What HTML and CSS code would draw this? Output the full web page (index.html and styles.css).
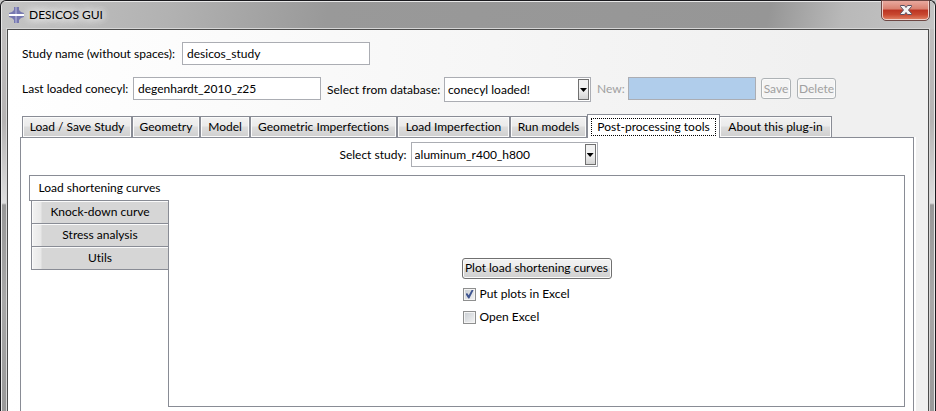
FILE: index.html
```html
<!DOCTYPE html>
<html lang="en">
<head>
<meta charset="utf-8">
<title>DESICOS GUI</title>
<link rel="stylesheet" href="styles.css">
</head>
<body>
<div class="window">
  <header class="titlebar">
    <svg class="app-icon" width="15" height="16" viewBox="0 0 15 16" aria-hidden="true">
      <path d="M5 0h5v3l2 2 3 1v4l-3 1-2 2v3H5v-3l-2-2-3-1V6l3-1 2-2z" fill="#7678b0"/>
      <path d="M6 0h2v16H6z" fill="#9a9bc8"/>
      <path d="M0 7h15v2H0z" fill="#fff"/>
    </svg>
    <h1 class="title">DESICOS GUI</h1>
    <button class="close" type="button" aria-label="Close">
      <svg width="12" height="10" viewBox="0 0 12 10" aria-hidden="true">
        <path d="M.5.5h4L6 2.500 7.500.5h4v1L8.500 5l3 3.500v1h-4L6 7.500 4.500 9.500h-4v-1L3.500 5l-3-3.500z" fill="#f4f4f4" stroke="#5b5160"/>
      </svg>
    </button>
  </header>
  <main class="client">
    <div class="row">
      <label class="label-study" for="study">Study name (without spaces):</label>
      <input class="field" id="study" type="text" value="desicos_study">
    </div>
    <div class="row row-conecyl">
      <label class="label-conecyl" for="conecyl">Last loaded conecyl:</label>
      <input class="field" id="conecyl" type="text" value="degenhardt_2010_z25">
      <label class="label-database" for="database">Select from database:</label>
      <span class="combo combo-database">
        <select id="database"><option>conecyl loaded!</option></select>
        <span class="arrow"></span>
      </span>
      <label class="label-new" for="new">New:</label>
      <input class="field field-new" id="new" type="text" disabled>
      <button class="button save" type="button" disabled>Save</button>
      <button class="button delete" type="button" disabled>Delete</button>
    </div>
    <nav class="tabs" role="tablist">
      <button class="tab" role="tab" type="button">Load / Save Study</button>
      <button class="tab" role="tab" type="button">Geometry</button>
      <button class="tab" role="tab" type="button">Model</button>
      <button class="tab" role="tab" type="button">Geometric Imperfections</button>
      <button class="tab" role="tab" type="button">Load Imperfection</button>
      <button class="tab" role="tab" type="button">Run models</button>
      <button class="tab selected" role="tab" type="button" aria-selected="true"><span class="focus">Post-processing tools</span></button>
      <button class="tab" role="tab" type="button">About this plug-in</button>
    </nav>
    <section class="pane">
      <div class="study-row">
        <label class="label-select" for="select-study">Select study:</label>
        <span class="combo combo-study">
          <select id="select-study"><option>aluminum_r400_h800</option></select>
          <span class="arrow"></span>
        </span>
      </div>
      <div class="book">
        <nav class="side-tabs" role="tablist">
          <button class="side-tab side-selected" role="tab" type="button" aria-selected="true">Load shortening curves</button>
          <button class="side-tab" role="tab" type="button">Knock-down curve</button>
          <button class="side-tab" role="tab" type="button">Stress analysis</button>
          <button class="side-tab" role="tab" type="button">Utils</button>
        </nav>
        <div class="page">
          <div class="actions">
            <button class="button plot" type="button">Plot load shortening curves</button>
            <label class="check"><input type="checkbox" checked>Put plots in Excel</label>
            <label class="check"><input type="checkbox">Open Excel</label>
          </div>
        </div>
      </div>
    </section>
  </main>
</div>
</body>
</html>
```
FILE: styles.css
```css
* {
  box-sizing: border-box;
}

body {
  margin: 0;
  background: #c8c8c8;
  color: #000;
  font: 12px/16px Lato, "Open Sans", sans-serif;
  font-variant-ligatures: none;
}

button,
input,
select {
  margin: 0;
  color: inherit;
  font: inherit;
}

label,
button {
  white-space: nowrap;
}

.window {
  display: flex;
  flex-direction: column;
  min-height: 100vh;
  padding: 0 6px;
  border: solid #1a1a1e;
  border-width: 1px 1px 0;
  border-radius: 6px 6px 0 0;
  background:
    linear-gradient(#e8e8e8, #e8e8e8) left / 1px 100% no-repeat,
    linear-gradient(#e8e8e8, #e8e8e8) right / 1px 100% no-repeat,
    linear-gradient(#e8e8e8, #e8e8e8) top / 100% 1px no-repeat,
    linear-gradient(100deg, #c4c4c4, #b2b2b2 18%, #999 35%, #969696 82%, #b9b9b9 90%, #c4c4c4) top / 100% 28px no-repeat,
    linear-gradient(#c0bebe 28px, #b5b3b3 120px, #dedede 202px, #989898 204px, #a8a8a8 300px, #999);
}

.titlebar {
  display: flex;
  align-items: flex-start;
  height: 28px;
  padding-left: 2px;
}

.app-icon {
  margin-top: 6px;
}

.title {
  margin: 5px 0 0 5px;
  font-size: 12px;
  font-weight: 400;
  line-height: 18px;
  text-shadow: 0 0 8px #fff, 0 0 8px #fff, 0 0 12px #fff;
}

.close {
  display: flex;
  align-items: center;
  justify-content: center;
  width: 47px;
  height: 19px;
  margin-left: auto;
  padding: 0;
  border: 1px solid #f0cfc8;
  border-top: 0;
  border-radius: 0 0 4px 4px;
  outline: 1px solid #6e4743;
  background: linear-gradient(#e9a99e, #d9806f 45%, #bb3322 50%, #c8472f 75%, #dd7a5e);
}

.client {
  display: flex;
  flex: 1;
  flex-direction: column;
  padding: 12px 12px 0;
  border: solid #4c4c4c;
  border-width: 1px 1px 0;
  outline: 1px solid #d6d6d6;
  background: linear-gradient(90deg, #fff, #f0f0f0 88%);
}

.row {
  display: flex;
  padding-left: 2px;
}

.row > label {
  line-height: 23px;
}

.row-conecyl {
  margin-top: 12px;
}

.label-study {
  width: 160px;
}

.label-conecyl {
  width: 111px;
}

.label-database {
  width: 123px;
  padding-left: 6px;
}

.row > .label-database {
  line-height: 25px;
}

.label-new {
  width: 37px;
  padding-left: 6px;
  color: #a0a0a0;
}

.field {
  width: 188px;
  height: 23px;
  padding: 0 4px;
  border: 1px solid #abadb3;
  background: #fff;
}

.field-new {
  width: 128px;
  background: #b0cdeb;
}

.combo {
  position: relative;
  display: flex;
  height: 25px;
}

.combo-database {
  width: 147px;
}

.combo-study {
  width: 187px;
}

.combo select {
  width: 100%;
  padding: 0 16px 0 3px;
  border: 1px solid #abadb3;
  border-radius: 0;
  background: #fff;
  appearance: none;
}

.arrow {
  position: absolute;
  top: 2px;
  right: 2px;
  bottom: 2px;
  width: 11px;
  border: 1px solid #707070;
  background: linear-gradient(#f2f2f2 50%, #d4d4d4);
  pointer-events: none;
}

.arrow::after {
  content: "";
  position: absolute;
  top: 8px;
  left: 1px;
  width: 7px;
  height: 4px;
  background: #000;
  clip-path: polygon(0 0, 100% 0, 50% 100%);
}

.button {
  height: 21px;
  padding: 0;
  border: 1px solid #707070;
  border-radius: 3px;
  background: linear-gradient(#f2f2f2, #ebebeb 50%, #dddddd 50%, #cfcfcf);
  box-shadow: inset 0 0 0 1px #fbfbfb;
  line-height: 18px;
}

.button:disabled {
  border-color: #adb2b5;
  background: #f4f4f4;
  color: #a0a0a0;
}

.save {
  width: 30px;
  margin: 1px 6px 0 5px;
}

.delete {
  width: 39px;
  margin-top: 1px;
}

.tabs {
  display: grid;
  grid-template-columns: 110px 68px 50px 147px 113px 77px 133px 112px;
  align-items: end;
  margin-top: 12px;
  padding-left: 2px;
}

.tab {
  height: 21px;
  padding: 0;
  border: 1px solid #898c95;
  border-width: 1px 1px 0;
  background: linear-gradient(#f2f2f2, #ebebeb 45%, #dddddd 50%, #cfcfcf);
  box-shadow: inset 0 0 0 1px #fbfbfb;
}

.selected {
  position: relative;
  height: 24px;
  margin-bottom: -1px;
  padding: 3px;
  background: #fff;
  box-shadow: none;
}

.selected + .tab {
  border-left-width: 0;
}

.focus {
  display: block;
  border: 1px dotted #000;
}

.pane {
  display: flex;
  flex: 1;
  flex-direction: column;
  margin-right: 2px;
  padding: 4px 8px 4px;
  border: solid #898c95;
  border-width: 1px 1px 0;
  background: #fff;
  box-shadow: 2px 0 #fff;
}

.study-row {
  display: flex;
  gap: 4px;
  align-items: center;
  justify-content: center;
  padding-left: 3px;
}

.book {
  display: flex;
  flex: 1;
  margin-top: 8px;
}

.side-tabs {
  display: flex;
  flex-direction: column;
  align-items: flex-end;
  width: 140px;
  margin-right: -1px;
}

.side-tab {
  width: 138px;
  height: 23px;
  padding: 0;
  border: 1px solid #898c95;
  border-top-width: 0;
  background: linear-gradient(90deg, #f2f2f2, #e8e8e8 9px, #d6d6d6 10px);
  box-shadow: inset 1px 1px #fbfbfb;
}

.side-selected {
  position: relative;
  width: 140px;
  height: 26px;
  border-width: 1px 0 1px 1px;
  background: #fff;
  box-shadow: none;
}

.page {
  display: flex;
  flex: 1;
  align-items: center;
  justify-content: center;
  border: 1px solid #898c95;
}

.actions {
  display: flex;
  flex-direction: column;
  align-items: flex-start;
  padding-top: 4px;
}

.plot {
  width: 150px;
  margin-bottom: 4px;
}

.check {
  display: flex;
  gap: 4px;
  align-items: center;
  height: 23px;
}

.check input {
  position: relative;
  width: 13px;
  height: 13px;
  margin-left: 1px;
  border: 1px solid #8e8f8f;
  outline: 1px solid #f4f4f4;
  outline-offset: -2px;
  background: linear-gradient(135deg, #c8cdd2, #f4f4f4);
  appearance: none;
}

.check input:checked::after {
  content: "";
  position: absolute;
  top: 1px;
  left: 2px;
  width: 8px;
  height: 9px;
  background: #3f5590;
  clip-path: polygon(0 50%, 20% 38%, 40% 65%, 80% 0, 100% 8%, 48% 100%, 35% 100%);
}
```
